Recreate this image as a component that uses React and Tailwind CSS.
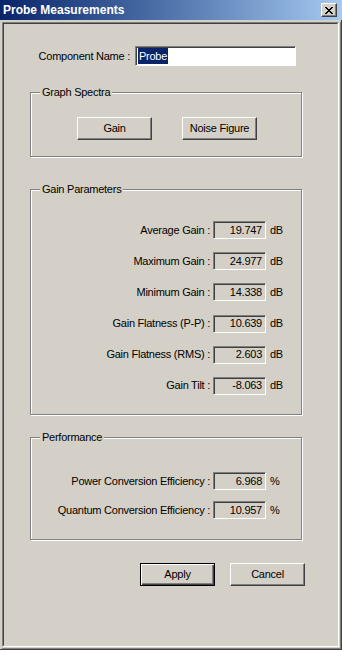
import React from 'react';

const face = "font-['Liberation_Sans',Arial,sans-serif]";

const raised =
  'bg-[#d4d0c8] border border-t-white border-l-white border-r-[#404040] border-b-[#404040] shadow-[inset_-1px_-1px_0_#808080]';

const sunken =
  'border border-t-[#808080] border-l-[#808080] border-r-white border-b-white shadow-[inset_1px_1px_0_#404040]';

const Group = ({ title, height, pad, children }) => (
  <div
    className={`relative ml-[26px] w-[272px] border border-[#808080] shadow-[inset_1px_1px_0_#fff,1px_1px_0_#fff] ${height} ${pad}`}
  >
    <span className="absolute -top-[7px] left-[9px] bg-[#d4d0c8] px-[2px] leading-[13px]">{title}</span>
    {children}
  </div>
);

const Field = ({ label, value, unit }) => (
  <div className="flex items-center h-[18px]">
    <span className="w-[179px] text-right leading-[13px] whitespace-nowrap">{label}</span>
    <div className={`ml-[3px] w-[53px] h-[18px] flex items-center justify-end pr-[3px] leading-[13px] ${sunken}`}>
      {value}
    </div>
    <span className="ml-[4px] leading-[13px]">{unit}</span>
  </div>
);

const Button = ({ children, primary }) => (
  <button
    className={`w-[75px] h-[23px] flex items-center justify-center leading-[13px] text-black ${
      primary
        ? 'bg-[#d4d0c8] border border-black shadow-[inset_1px_1px_0_#fff,inset_-1px_-1px_0_#404040,inset_-2px_-2px_0_#808080]'
        : raised
    }`}
  >
    {children}
  </button>
);

const gainRows = [
  ['Average Gain :', '19.747'],
  ['Maximum Gain :', '24.977'],
  ['Minimum Gain :', '14.338'],
  ['Gain Flatness (P-P) :', '10.639'],
  ['Gain Flatness (RMS) :', '2.603'],
  ['Gain Tilt :', '-8.063'],
];

export default function App() {
  return (
    <div className={`w-[342px] h-[660px] bg-white ${face} text-[11px] tracking-[-0.25px] text-black`}>
      <div className="w-[342px] h-[650px] bg-[#d4d0c8] flex flex-col">
        {/* title bar */}
        <div className="h-[20px] flex items-center justify-between bg-gradient-to-r from-[#0a246a] to-[#a6caf0] pl-[3px] pr-[5px]">
          <span className="text-white font-bold text-[12px] tracking-normal leading-[14px]">Probe Measurements</span>
          <div className={`w-[16px] h-[14px] flex items-center justify-center ${raised}`}>
            <svg width="8" height="7" viewBox="0 0 8 7" shapeRendering="crispEdges">
              <path d="M0 0h2v1H0zM6 0h2v1H6zM1 1h2v1H1zM5 1h2v1H5zM2 2h4v1H2zM3 3h2v1H3zM2 4h4v1H2zM1 5h2v1H1zM5 5h2v1H5zM0 6h2v1H0zM6 6h2v1H6z" fill="#000" />
            </svg>
          </div>
        </div>

        {/* frame */}
        <div className="flex-1 flex flex-col pt-[2px] pl-[2px] border-r border-b border-[#404040]">
          <div className="flex-1 flex flex-col pr-[1px] pb-[1px] border-r border-b border-[#808080]">
            <div className="flex-1 border border-t-[#808080] border-l-[#808080] border-r-white border-b-white">
              <div className="h-full border border-t-[#404040] border-l-[#404040] border-r-[#d4d0c8] border-b-[#d4d0c8] flex flex-col">
                <div className="mt-[22px] flex items-center">
                  <span className="w-[126px] text-right leading-[13px]">Component Name :</span>
                  <div className={`ml-[5px] w-[161px] h-[20px] bg-white flex items-center px-[2px] ${sunken}`}>
                    <span className="bg-[#0a246a] text-white leading-[16px] px-[1px]">Probe</span>
                  </div>
                </div>

                <div className="mt-[26px]">
                  <Group title="Graph Spectra" height="h-[65px]" pad="pt-[24px] pl-[46px]">
                    <div className="flex gap-[30px]">
                      <Button>Gain</Button>
                      <Button>Noise Figure</Button>
                    </div>
                  </Group>
                </div>

                <div className="mt-[32px]">
                  <Group title="Gain Parameters" height="h-[226px]" pad="pt-[31px]">
                    <div className="flex flex-col gap-[13.2px]">
                      {gainRows.map(([label, value]) => (
                        <Field key={label} label={label} value={value} unit="dB" />
                      ))}
                    </div>
                  </Group>
                </div>

                <div className="mt-[22px]">
                  <Group title="Performance" height="h-[103px]" pad="pt-[34px]">
                    <div className="flex flex-col gap-[11px]">
                      <Field label="Power Conversion Efficiency :" value="6.968" unit="%" />
                      <Field label="Quantum Conversion Efficiency :" value="10.957" unit="%" />
                    </div>
                  </Group>
                </div>

                <div className="mt-[23px] ml-[136px] flex gap-[15px]">
                  <Button primary>Apply</Button>
                  <Button>Cancel</Button>
                </div>
              </div>
            </div>
          </div>
        </div>
      </div>
    </div>
  );
}
